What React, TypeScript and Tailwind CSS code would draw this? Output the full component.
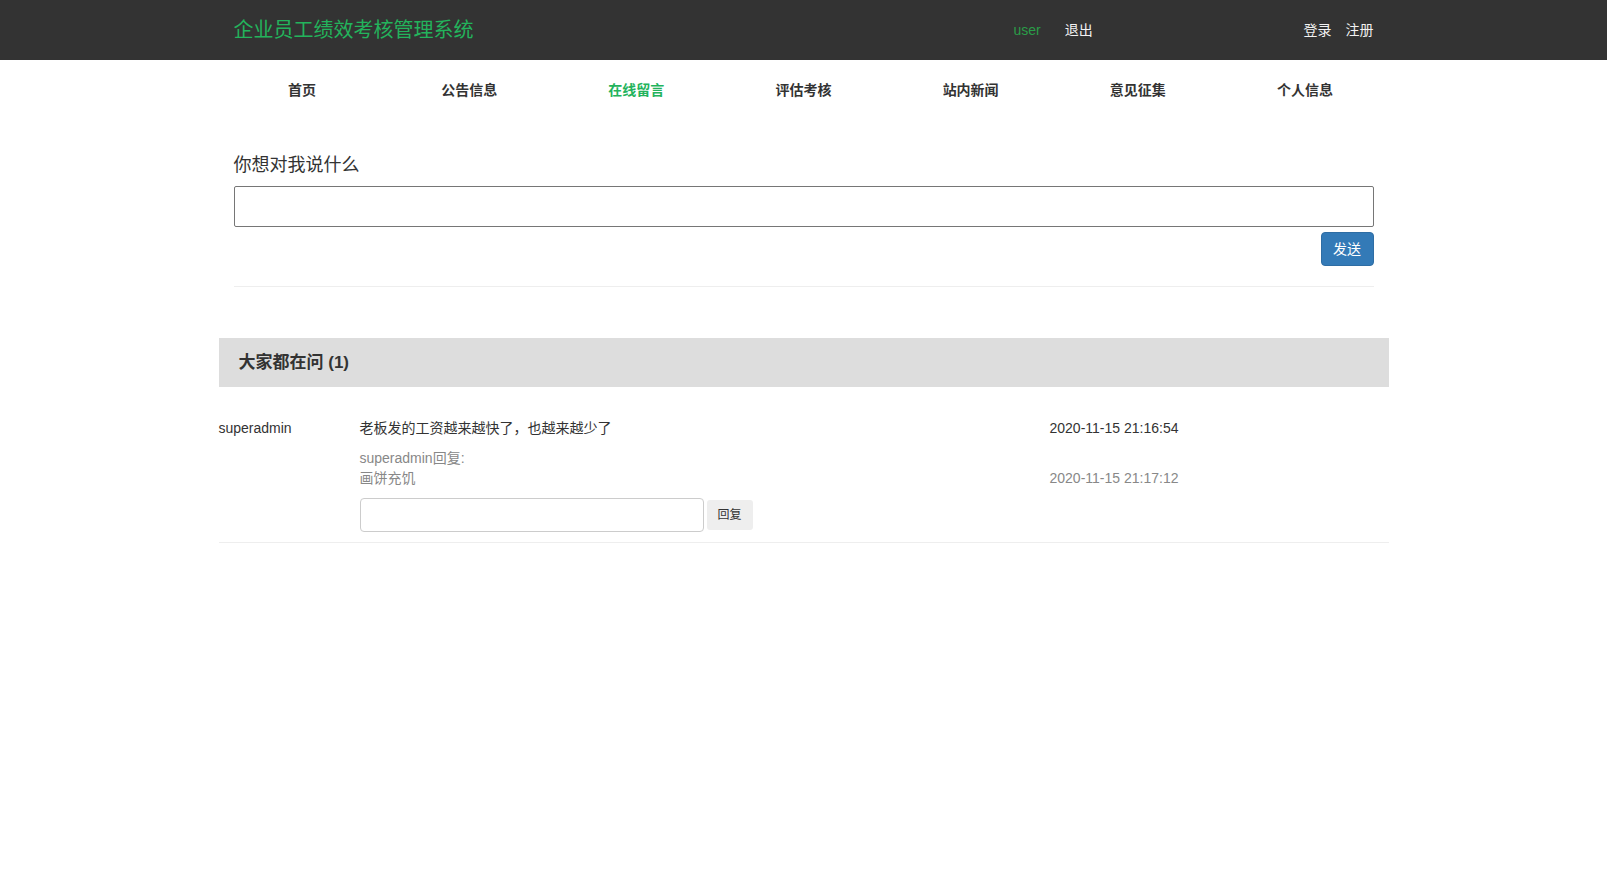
export default function App() {
  const navItems = ["首页", "公告信息", "在线留言", "评估考核", "站内新闻", "意见征集", "个人信息"];
  return (
    <div className="min-h-screen bg-white font-['Liberation_Sans','Noto_Sans_CJK_SC',sans-serif] text-[#333]">
      <header className="h-[60px] bg-[#333]">
        <div className="mx-auto flex h-full w-[1170px] items-center px-[15px]">
          <div className="w-[780px] flex-none text-[20px] leading-[28px] text-[#23b35c]">企业员工绩效考核管理系统</div>
          <div className="flex items-center gap-[24px] text-[14px] leading-[20px]">
            <span className="text-[#2a9d48]">user</span>
            <span className="text-[#f2f2f2]">退出</span>
          </div>
          <div className="ml-auto flex items-center gap-[14px] text-[14px] leading-[20px] text-[#f2f2f2]">
            <span>登录</span>
            <span>注册</span>
          </div>
        </div>
      </header>

      <div className="mx-auto w-[1170px]">
        <nav className="grid h-[60px] grid-cols-7 items-center text-center text-[14px] font-bold leading-[20px]">
          {navItems.map((n) => (
            <span key={n} className={n === "在线留言" ? "text-[#23b35c]" : "text-[#333]"}>
              {n}
            </span>
          ))}
        </nav>

        <div className="px-[15px] pt-[33px]">
          <div className="text-[18px] leading-[25px] text-[#333]">你想对我说什么</div>
          <div className="mt-[8px] h-[41px] w-full rounded-[2px] border border-[#767676] bg-white"></div>
          <div className="mt-[5px] flex justify-end">
            <button className="h-[34px] w-[53px] rounded-[4px] border border-[#2e6da4] bg-[#337ab7] text-[14px] text-white">发送</button>
          </div>
          <div className="mt-[20px] border-t border-[#eee]"></div>
        </div>

        <div className="mt-[51px] flex h-[49px] items-center bg-[#ddd] pl-[20px] text-[17px] font-bold leading-[24px] text-[#333]">
          大家都在问 (1)
        </div>

        <div className="flex border-b border-[#eee] pb-[10px] pt-[31px] text-[14px] leading-[20px]">
          <div className="w-[141px] flex-none text-[#333]">superadmin</div>
          <div className="flex-1">
            <div className="flex">
              <div className="w-[690px] flex-none text-[#333]">老板发的工资越来越快了，也越来越少了</div>
              <div className="text-[#333]">2020-11-15 21:16:54</div>
            </div>
            <div className="mt-[10px] flex items-end text-[#888]">
              <div className="w-[690px] flex-none">
                <div>superadmin回复:</div>
                <div>画饼充饥</div>
              </div>
              <div>2020-11-15 21:17:12</div>
            </div>
            <div className="mt-[10px] flex items-center">
              <div className="h-[34px] w-[344px] rounded-[4px] border border-[#ccc] bg-white"></div>
              <button className="ml-[3px] h-[30px] w-[46px] rounded-[3px] bg-[#eee] text-[12px] text-[#333]">回复</button>
            </div>
          </div>
        </div>
      </div>
    </div>
  );
}
